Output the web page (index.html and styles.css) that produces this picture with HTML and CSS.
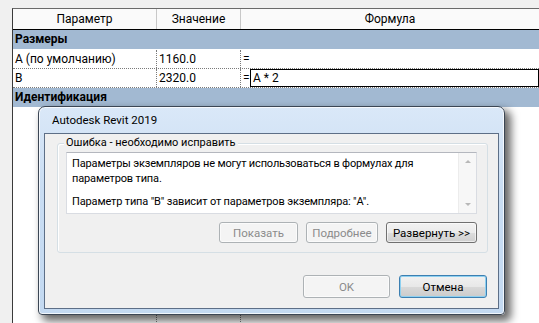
FILE: index.html
```html
<!DOCTYPE html>
<html lang="ru">
<head>
  <meta charset="UTF-8">
  <title>Параметры семейства</title>
  <link rel="stylesheet" href="styles.css">
</head>
<body>
  <!-- Таблица параметров -->
  <div class="grid">
    <div class="row head">
      <div class="c c1">Параметр</div>
      <div class="c c2">Значение</div>
      <div class="c c3">Формула</div>
    </div>
    <div class="row group">Размеры</div>
    <div class="row">
      <div class="c c1">А (по умолчанию)</div>
      <div class="c c2">1160.0</div>
      <div class="c c3">=</div>
    </div>
    <div class="row">
      <div class="c c1">В</div>
      <div class="c c2">2320.0</div>
      <div class="c c3"><span class="eq">=</span><span class="edit">А * 2</span></div>
    </div>
    <div class="row group">Идентификация</div>
    <div class="row filler">
      <div class="c c1"></div>
      <div class="c c2"></div>
      <div class="c c3"></div>
    </div>
  </div>

  <!-- Окно ошибки -->
  <div class="dialog">
    <div class="title">Autodesk Revit 2019</div>
    <div class="client">
      <div class="groupbox">
        <div class="legend">Ошибка - необходимо исправить</div>
        <div class="message">
          <div class="text">
            <p>Параметры экземпляров не могут использоваться в формулах для<br>параметров типа.</p>
            <p>Параметр типа "B" зависит от параметров экземпляра: "A".</p>
          </div>
          <div class="scroll">
            <span class="arrow up"></span>
            <span class="arrow down"></span>
          </div>
        </div>
        <div class="buttons">
          <button class="btn off w1">Показать</button>
          <button class="btn off w2">Подробнее</button>
          <button class="btn w3">Развернуть &gt;&gt;</button>
        </div>
      </div>
      <div class="buttons bottom">
        <button class="btn off w4">OK</button>
        <button class="btn focus w5">Отмена</button>
      </div>
    </div>
  </div>
</body>
</html>
```

FILE: styles.css
```css
/* Общие стили */
body {
  margin: 0;
  height: 323px;
  overflow: hidden;
  background: #f0f0f0;
  font-family: Roboto, "Noto Sans", sans-serif;
  font-size: 12px;
  color: #000;
}

/* Таблица параметров */
.grid {
  margin: 8px 0 0 12px;
  height: 315px;
  display: flex;
  flex-direction: column;
  background: #fff;
  border-left: 1px solid #3a3a3a;
  border-top: 1px solid #6a6a6a;
}

.row {
  display: flex;
  height: 18px;
  line-height: 18px;
  border-bottom: 1px dotted #7a7a7a;
}

.c {
  box-sizing: border-box;
  padding-left: 2px;
  white-space: nowrap;
  overflow: hidden;
}

.c1 { width: 144px; border-right: 1px dotted #7a7a7a; }
.c2 { width: 84px; border-right: 1px dotted #7a7a7a; }
.c3 { flex: 1; display: flex; }

.head {
  height: 20px;
  line-height: 20px;
  background: #fafafa;
  border-bottom: 1px solid #000;
}

.head .c {
  text-align: center;
  padding: 0;
}

.head .c3 {
  justify-content: center;
}

.head .c1,
.head .c2 {
  border-right: 1px solid #c8c8c8;
}

.group {
  height: 19px;
  line-height: 19px;
  padding-left: 2px;
  background: #a2b9d2;
  font-weight: bold;
  border-bottom: 1px solid #fff;
}

.eq {
  width: 6px;
}

.edit {
  flex: 1;
  margin-left: 1px;
  padding-left: 2px;
  border: 1px solid #000;
  line-height: 16px;
}

.filler {
  flex: 1;
  border-bottom: none;
}

/* Окно ошибки */
.dialog {
  position: absolute;
  left: 38px;
  top: 106px;
  width: 467px;
  height: 209px;
  box-sizing: border-box;
  padding: 0 5px 5px 5px;
  display: flex;
  flex-direction: column;
  font-size: 11px;
  border: 1px solid #3b4654;
  border-radius: 7px 7px 4px 4px;
  background: linear-gradient(#dae8f8, #c9ddf3 40%, #c3d9f1);
  box-shadow: inset 0 0 0 1px rgba(255, 255, 255, 0.75), 5px 5px 9px 1px rgba(0, 0, 0, 0.6);
}

.title {
  height: 26px;
  line-height: 26px;
  padding-left: 8px;
  font-size: 11.5px;
}

.client {
  flex: 1;
  display: flex;
  flex-direction: column;
  background: #f0f0f0;
  border: 1px solid #5d6f87;
}

.groupbox {
  position: relative;
  margin: 9px 10px 0 12px;
  padding: 8px 10px 9px 8px;
  border: 1px solid #d5dfe5;
  border-radius: 3px;
  box-shadow: inset 1px 1px 0 #fff;
}

.legend {
  position: absolute;
  top: -8px;
  left: 6px;
  padding: 0 2px;
  background: #f0f0f0;
}

.message {
  height: 60px;
  display: flex;
  background: #fff;
  border: 1px solid #d9dce2;
  border-top-color: #b4b7be;
}

.text {
  flex: 1;
  padding: 3px 4px 0 5px;
  line-height: 15px;
  letter-spacing: -0.15px;
  white-space: nowrap;
}

.text p {
  margin: 0 0 8px;
}

.scroll {
  width: 17px;
  display: flex;
  flex-direction: column;
  justify-content: space-between;
  background: #f7f7f7;
  border-left: 1px solid #ececec;
}

.arrow {
  height: 17px;
  display: flex;
  align-items: center;
  justify-content: center;
}

.arrow::before {
  content: "";
  border-left: 3px solid transparent;
  border-right: 3px solid transparent;
}

.up::before { border-bottom: 3px solid #b8b8b8; }
.down::before { border-top: 3px solid #b8b8b8; }

/* Кнопки */
.buttons {
  display: flex;
  justify-content: flex-end;
  gap: 8px;
  margin-top: 8px;
}

.btn {
  height: 21px;
  padding: 0;
  font-family: inherit;
  font-size: 11.5px;
  color: #000;
  border: 1px solid #707070;
  border-radius: 3px;
  background: linear-gradient(#f2f2f2 0%, #ebebeb 50%, #dddddd 51%, #cfcfcf 100%);
  box-shadow: inset 0 0 0 1px rgba(255, 255, 255, 0.6);
}

.btn.off {
  color: #8b8b8b;
  border-color: #adb2b5;
  background: #f4f4f4;
}

.btn.focus {
  border-color: #3c7fb1;
  background: linear-gradient(#f1f1f1 0%, #e8e8e8 50%, #d9d9d9 51%, #cbcbcb 100%);
  box-shadow: inset 0 0 0 1px #8ed0f0;
}

.w1 { width: 79px; }
.w2 { width: 72px; }
.w3 { width: 91px; }
.w4 { width: 87px; }
.w5 { width: 88px; }

.bottom {
  margin: auto 11px 10px 0;
  gap: 9px;
}

.bottom .btn {
  height: 23px;
}
```
